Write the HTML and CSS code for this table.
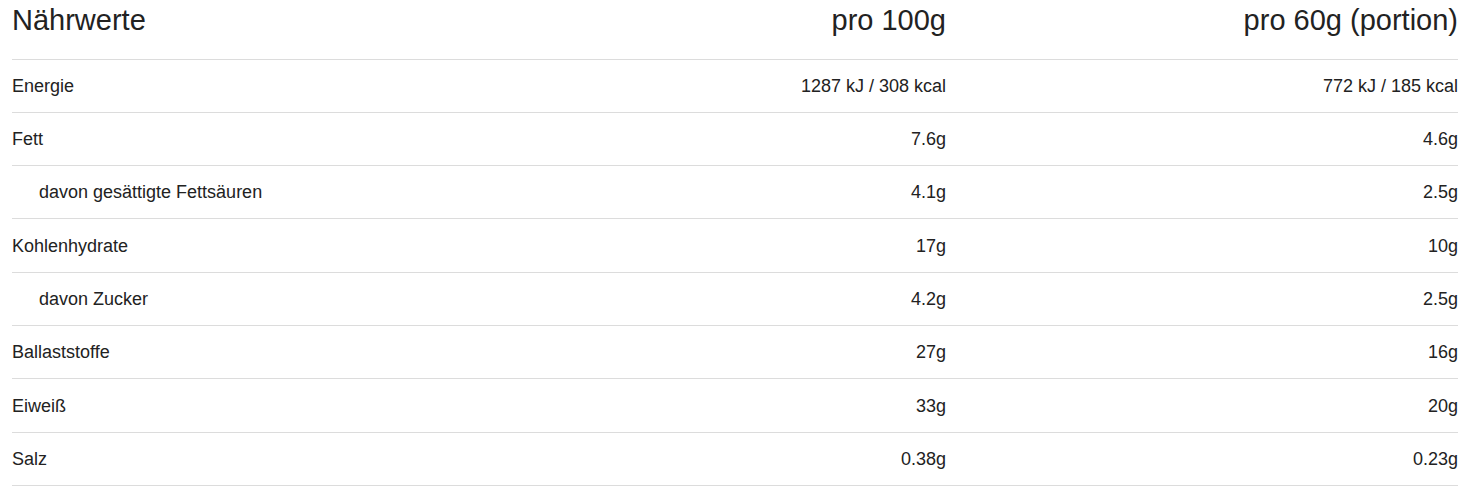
FILE: index.html
```html
<!DOCTYPE html>
<html lang="de">
<head>
<meta charset="utf-8">
<title>Nährwerte</title>
<link rel="stylesheet" href="styles.css">
</head>
<body>
<table class="nutrition">
  <thead>
    <tr>
      <th class="label">Nährwerte</th>
      <th class="num">pro 100g</th>
      <th class="num">pro 60g (portion)</th>
    </tr>
  </thead>
  <tbody>
    <tr><td class="label">Energie</td><td class="num">1287 kJ / 308 kcal</td><td class="num">772 kJ / 185 kcal</td></tr>
    <tr><td class="label">Fett</td><td class="num">7.6g</td><td class="num">4.6g</td></tr>
    <tr><td class="label sub">davon gesättigte Fettsäuren</td><td class="num">4.1g</td><td class="num">2.5g</td></tr>
    <tr><td class="label">Kohlenhydrate</td><td class="num">17g</td><td class="num">10g</td></tr>
    <tr><td class="label sub">davon Zucker</td><td class="num">4.2g</td><td class="num">2.5g</td></tr>
    <tr><td class="label">Ballaststoffe</td><td class="num">27g</td><td class="num">16g</td></tr>
    <tr><td class="label">Eiweiß</td><td class="num">33g</td><td class="num">20g</td></tr>
    <tr><td class="label">Salz</td><td class="num">0.38g</td><td class="num">0.23g</td></tr>
  </tbody>
</table>
</body>
</html>
```
FILE: styles.css
```css
html, body {
  margin: 0;
  padding: 0;
  background: #ffffff;
}

body {
  font-family: "Liberation Sans", Arial, sans-serif;
  color: #222222;
}

.nutrition {
  margin-left: 12px;
  width: 1446px;
  border-collapse: collapse;
  table-layout: fixed;
}

.nutrition th {
  font-weight: normal;
  font-size: 29px;
  line-height: 33px;
  height: 59px;
  padding: 4px 0 0 0;
  vertical-align: top;
  box-sizing: border-box;
  border-bottom: 1px solid #dcdcdc;
}

.nutrition td {
  font-size: 18px;
  line-height: 20px;
  height: 53.33px;
  padding: 0;
  vertical-align: middle;
  box-sizing: border-box;
  border-bottom: 1px solid #dcdcdc;
}

.nutrition .label {
  text-align: left;
  width: 422px;
}

.nutrition .num {
  text-align: right;
  width: 512px;
}

.nutrition .sub {
  padding-left: 27px;
}
```
